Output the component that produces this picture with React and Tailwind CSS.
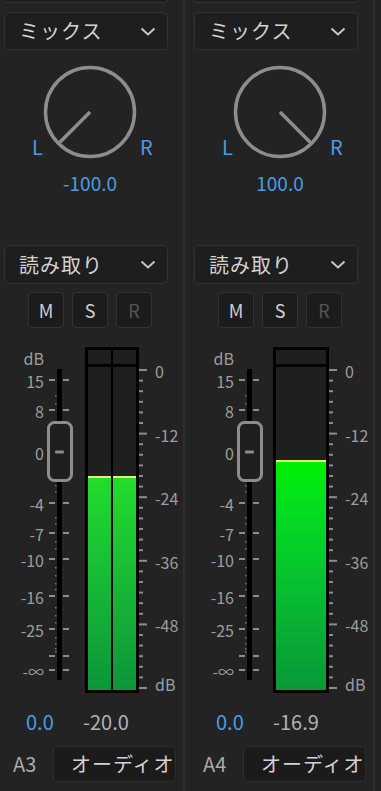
import React from 'react';

const font = { fontFamily: '"Noto Sans CJK JP", "Noto Sans", sans-serif' };

const dbY = (d) => 25 + 5.3 * -d;

const faderTicks = [
  { label: '15', y: 35 },
  { label: '8', y: 65 },
  { label: '0', y: 107 },
  { label: '-4', y: 158 },
  { label: '-7', y: 188 },
  { label: '-10', y: 214 },
  { label: '-16', y: 251 },
  { label: '-25', y: 284 },
  { label: '', y: 311 },
  { label: '-∞', y: 325 },
];

const faderDots = [50, 58, 82, 92, 122, 131, 140, 146, 172, 178, 196, 203, 222, 230, 238, 244, 262, 270, 277, 292, 298, 303, 306];

const Chevron = () => (
  <svg width="16" height="9" viewBox="0 0 16 9" className="shrink-0">
    <path d="M1.5 1.5 L8 7.5 L14.5 1.5" fill="none" stroke="#c8c8c8" strokeWidth="2" />
  </svg>
);

const Dropdown = ({ label, className = '' }) => (
  <div className={`ml-[4px] w-[164px] flex items-center justify-between pl-[14px] pr-[11px] rounded-[5px] border border-[#323232] bg-[#1e1e1e] ${className}`}>
    <span className="text-[20px] leading-none text-[#d2d2d2] tracking-[1px]">{label}</span>
    <Chevron />
  </div>
);

const Knob = ({ pan }) => {
  // angle from straight up, clockwise: -100 -> down-left, +100 -> down-right
  const t = ((pan / 100) * 135 * Math.PI) / 180;
  const x2 = 48 + Math.sin(t) * 43;
  const y2 = 48 - Math.cos(t) * 43;
  return (
    <svg width="96" height="96" viewBox="0 0 96 96">
      <circle cx="48" cy="48" r="44.5" fill="none" stroke="#8d8d8d" strokeWidth="3.5" />
      <line x1="48" y1="48" x2={x2} y2={y2} stroke="#8d8d8d" strokeWidth="3.5" />
    </svg>
  );
};

const Fader = () => (
  <svg width="35" height="350" viewBox="0 0 35 350" className="shrink-0">
    {faderTicks.map((t) => (
      <g key={t.y}>
        <rect x="4" y={t.y - 1} width="6" height="2" fill="#8d8d8d" />
        <rect x="18" y={t.y - 1} width="6" height="2" fill="#8d8d8d" />
      </g>
    ))}
    {faderDots.map((y) => (
      <rect key={y} x="10" y={y} width="1.5" height="1.5" fill="#777" />
    ))}
    <rect x="12" y="24" width="5" height="311" fill="#000" />
    <rect x="3.5" y="77.5" width="23" height="58" rx="6" fill="#1f1f1f" stroke="#8d8d8d" strokeWidth="3" />
    <rect x="10" y="105.5" width="9" height="3" rx="1" fill="#8d8d8d" />
  </svg>
);

const RightTicks = () => {
  const ticks = [];
  for (let d = 0; d <= 60; d += 2) {
    const major = d % 12 === 0;
    ticks.push(<rect key={d} x="0" y={dbY(-d) - 1} width={major ? 8 : 4} height="2" fill="#8d8d8d" />);
  }
  return (
    <svg width="10" height="350" viewBox="0 0 10 350" className="shrink-0">
      {ticks}
    </svg>
  );
};

const Meter = ({ level, stereo }) => {
  const top = 3 + 5.3 * -level;
  const fill = (bright) => (
    <div className="flex-1 flex flex-col justify-end">
      <div
        className={`border-t-2 border-[#e9ea7c] ${bright ? 'bg-linear-to-b from-[#00f000] to-[#0a9838]' : 'bg-linear-to-b from-[#22dc2a] to-[#0c963a]'}`}
        style={{ height: 323 - top }}
      />
    </div>
  );
  return (
    <div className={`mt-[2px] h-[346px] border-[3px] border-black flex flex-col shrink-0 ${stereo ? 'ml-[5px] w-[54px]' : 'ml-[3px] w-[56px]'}`}>
      <div className="h-[14px] flex bg-[#1f1f1f]">
        <div className="flex-1" />
        {stereo && <div className="w-[2px] bg-black" />}
        {stereo && <div className="flex-1" />}
      </div>
      <div className="h-[3px] bg-black" />
      <div className="flex-1 flex bg-[#1f1f1f]">
        {fill(!stereo)}
        {stereo && <div className="w-[2px] bg-black" />}
        {stereo && fill(false)}
      </div>
    </div>
  );
};

const MeterSection = ({ level, stereo }) => (
  <div className="mt-[17px] h-[350px] flex">
    <div className="relative w-[45px] shrink-0 text-[#9d9d9d] text-[16px]">
      <span className="absolute right-[1px] top-[3px] leading-[20px]">dB</span>
      {faderTicks.filter((t) => t.label).map((t) => (
        <span key={t.y} className="absolute right-[1px] leading-[20px]" style={{ top: t.y - 9 }}>
          {t.label}
        </span>
      ))}
    </div>
    <Fader />
    <Meter level={level} stereo={stereo} />
    <RightTicks />
    <div className="relative flex-1 text-[#9d9d9d] text-[16px]">
      {[0, -12, -24, -36, -48].map((d) => (
        <span key={d} className="absolute left-[6px] leading-[20px]" style={{ top: dbY(d) - 9 }}>
          {d}
        </span>
      ))}
      <span className="absolute left-[6px] leading-[20px]" style={{ top: dbY(-60) - 14 }}>dB</span>
    </div>
  </div>
);

const Strip = ({ pan, level, stereo, peak, track }) => (
  <div className="w-[190px] h-full flex shrink-0">
    <div className="w-[183px] flex flex-col">
      <div className="ml-[4px] w-[164px] h-[3px] border-x border-b border-[#323232] rounded-b-[5px] bg-[#1e1e1e]" />
      <Dropdown label="ミックス" className="mt-[9px] h-[38px]" />
      <div className="mt-[14px] h-[96px] flex items-end pl-[32px]">
        <span className="text-[20px] leading-none text-[#4a9de4] mb-[3px] w-[10px]">L</span>
        <Knob pan={pan} />
        <span className="text-[20px] leading-none text-[#4a9de4] mb-[3px] ml-[2px]">R</span>
      </div>
      <div className="mt-[13px] h-[20px] text-center text-[19px] leading-[20px] text-[#4a9de4] pr-[3px]">
        {pan.toFixed(1)}
      </div>
      <Dropdown label="読み取り" className="mt-[52px] h-[39px]" />
      <div className="mt-[8px] flex gap-2 pl-[28px]">
        {['M', 'S', 'R'].map((l) => (
          <div
            key={l}
            className={`w-9 h-9 flex items-center justify-center rounded-[4px] border border-[#333] bg-[#1c1c1c] text-[18px] ${l === 'R' ? 'text-[#555]' : 'text-[#cfcfcf]'}`}
          >
            {l}
          </div>
        ))}
      </div>
      <MeterSection level={level} stereo={stereo} />
      <div className="mt-[17px] h-[20px] flex items-center pl-[26px] text-[20px] leading-none">
        <span className="w-[57px] text-[#4a9de4]">0.0</span>
        <span className="text-[#b2b2b2]">{peak}</span>
      </div>
      <div className="mt-[14px] h-[36px] flex items-center pl-[13px]">
        <span className="w-[40px] text-[20px] leading-none text-[#aaa]">{track}</span>
        <div className="w-[123px] h-[36px] flex items-center pl-[17px] rounded-[5px] border border-[#2e2e2e] bg-[#1b1b1b] overflow-hidden whitespace-nowrap">
          <span className="text-[20px] leading-none text-[#d2d2d2] tracking-[1px]">オーディオ</span>
        </div>
      </div>
    </div>
    <div className="w-[2px] bg-[#2e2e2e]" />
  </div>
);

export default function App() {
  return (
    <div className="w-[381px] h-[791px] overflow-hidden bg-[#232323] flex" style={font}>
      <Strip pan={-100} level={-20} stereo peak="-20.0" track="A3" />
      <Strip pan={100} level={-16.9} stereo={false} peak="-16.9" track="A4" />
    </div>
  );
}
